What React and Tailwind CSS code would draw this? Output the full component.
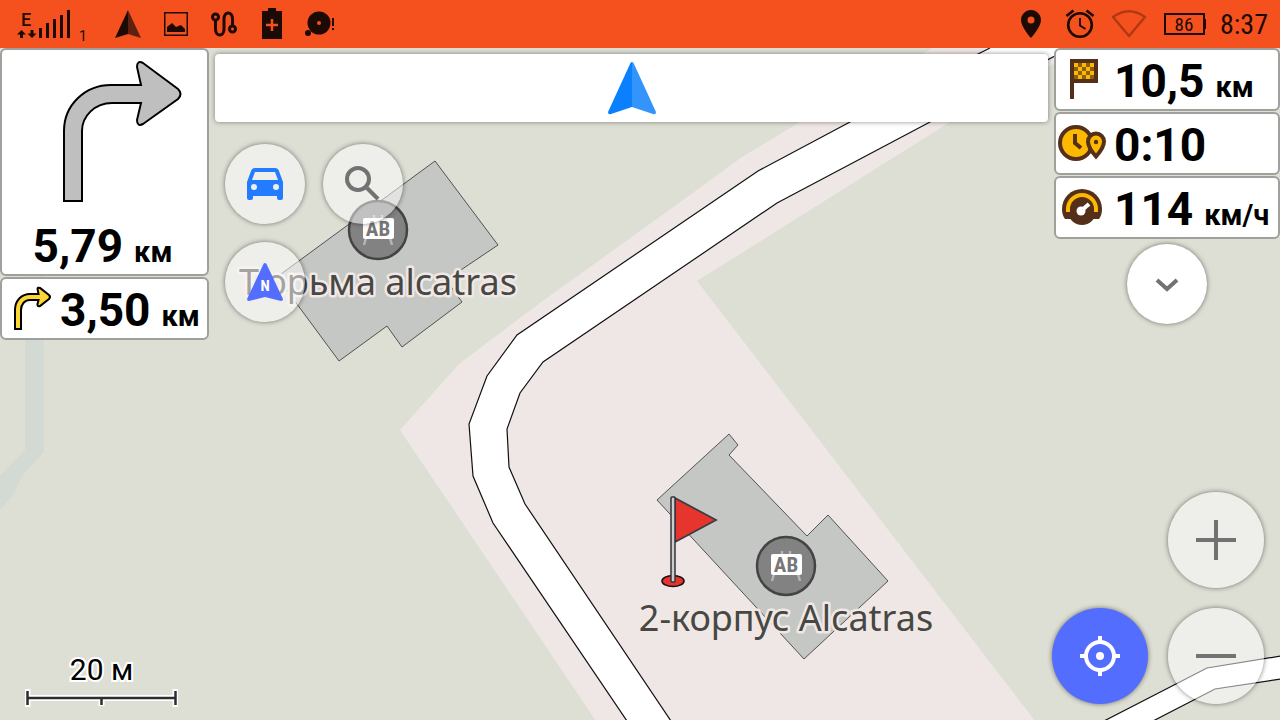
import { Fragment } from 'react';

const BUILDINGS = [
    '435,161 498,245 446,280 462,302 402,347 387,326 339,361 277,277',
    '729,434 738,445 729,455 807,536 828,515 888,581 804,659 657,500',
];

const ROADS = [
    {
        fill: 'M1100 -10 L990 48 L978 54 L850 122 L758 171 L517 335 L487 376 L469 424 L473 476 L493 523 L627 721 L671 721 L525 504 L509 467 L507 429 L520 393 L543 362 L777 203 L930 122 L1070 48 L1180 -10 Z',
        lines: ['M990 48 L978 54 L850 122 L758 171 L517 335 L487 376 L469 424 L473 476 L493 523 L627 721', 'M671 721 L525 504 L509 467 L507 429 L520 393 L543 362 L777 203 L930 122 L1070 48'],
    },
    {
        fill: 'M1104 721 L1207 668 L1281 656 L1281 679 L1215 689 L1153 721 Z',
        lines: ['M1104 721 L1207 668 L1281 656', 'M1153 721 L1215 689 L1281 679'],
    },
];

const POIS = [
    { x: 378, y: 230, label: 'Тюрьма alcatras' },
    { x: 786, y: 566, label: '2-корпус Alcatras' },
];

const SchoolPin = ({ x, y }) => (
    <g transform={`translate(${x} ${y})`}>
        <circle r="29" fill="#828282" stroke="#444" strokeWidth="2.5" />
        <path d="M-12 8 L-14 15 M12 8 L14 15 M-4 -12 V-15 M4 -12 V-15" stroke="#b4b4b4" strokeWidth="2.5" />
        <rect x="-15" y="-12" width="31" height="21" rx="2" fill="#fff" />
        <text y="6" textAnchor="middle" fontSize="21" className="fill-[#777] font-['Roboto_Condensed','Roboto',sans-serif] font-bold">AB</text>
    </g>
);

const MapView = () => (
    <svg viewBox="0 0 1280 720" preserveAspectRatio="xMidYMid slice" className="absolute inset-0 h-full w-full">
        <rect width="1280" height="720" fill="#dddfd4" />
        <path d="M25 0 H44 V452 L22 476 L14 494 L-2 512 V478 L8 467 L25 450 Z" fill="#d3dad4" />
        <path d="M947 40 L800 122 L742 157 L690 195 L540 303 L459 364 L400 430 L596 721 L1035 721 L697 281 L950 122 L1075 52 V40 Z" fill="#efe7e5" />
        {ROADS.map((road) => (
            <Fragment key={road.fill}>
                <path d={road.fill} fill="#fff" />
                {road.lines.map((d) => (
                    <path key={d} d={d} fill="none" stroke="#111" strokeWidth="1.2" />
                ))}
            </Fragment>
        ))}
        {BUILDINGS.map((points) => (
            <polygon key={points} points={points} fill="#c4c7c3" stroke="#444" strokeWidth="0.9" />
        ))}
        {POIS.map((poi) => (
            <g key={poi.label}>
                <SchoolPin x={poi.x} y={poi.y} />
                <text
                    x={poi.x}
                    y={poi.y + 65}
                    textAnchor="middle"
                    fontSize="36"
                    stroke="#f1e7e4"
                    strokeWidth="5"
                    strokeLinejoin="round"
                    paintOrder="stroke"
                    className="fill-[#464845] font-['Noto_Sans',sans-serif]"
                >
                    {poi.label}
                </text>
            </g>
        ))}
        {/* destination flag */}
        <ellipse cx="673" cy="581" rx="11" ry="5.5" fill="#e5352d" stroke="#111" strokeWidth="1.6" />
        <path d="M675 498 L716 520 L675 542 Z" fill="#e5352d" stroke="#3c3c44" strokeWidth="1.8" />
        <rect x="671" y="497" width="4" height="85" rx="1" fill="#ccc" stroke="#33333a" strokeWidth="1.5" />
    </svg>
);

const StatusBar = () => (
    <header className="relative flex h-12 items-center justify-between bg-[#f4511e] pr-3 pl-4 text-[#1d0a04]">
        <div className="flex items-center">
            <svg width="76" height="40" viewBox="16 4 76 40" fill="currentColor">
                <text x="21" y="26" fontSize="18" className="font-['Roboto',sans-serif] font-medium">E</text>
                <path d="M21.500 30 L26 34.500 H23 V38 H20 V34.500 H17 Z" />
                <path d="M32 38 L36.500 33.500 H33.500 V30 H30.500 V33.500 H27.500 Z" />
                <path d="M39 28 h3 v10 h-3 Z M46 23 h3 v15 h-3 Z M53 19 h3 v19 h-3 Z M60 15 h3 v23 h-3 Z M67 10 h3 v28 h-3 Z" />
                <text x="79" y="41" fontSize="14" className="font-['Roboto',sans-serif]">1</text>
            </svg>
            <svg width="26" height="30" viewBox="0 0 26 30" className="ml-[23px]">
                <path d="M13 1 L0 29 L13 25 Z" fill="#1d0a04" />
                <path d="M13 1 L26 29 L13 25 Z" fill="#5d210f" />
            </svg>
            <svg width="24" height="24" viewBox="0 0 24 24" className="ml-[23px]">
                <rect x="0.750" y="0.750" width="22.500" height="22.500" fill="none" stroke="currentColor" strokeWidth="1.5" />
                <path d="M3 20 V15 L8 11 L12 15 L17 13 L21 17 V20 Z" fill="currentColor" />
            </svg>
            <svg width="28" height="28" viewBox="0 0 28 28" className="ml-[22px]" fill="none" stroke="currentColor" strokeWidth="3">
                <circle cx="5.500" cy="7" r="3" />
                <circle cx="22.500" cy="19" r="3" />
                <path d="M5.500 10 V19 C5.500 27 14 27 14 19 V9 C14 1 22.500 1 22.500 9 V16" />
            </svg>
            <svg width="20" height="32" viewBox="0 0 20 32" className="ml-6">
                <path d="M6 0 H14 V3 H20 V31 H0 V3 H6 Z" fill="currentColor" />
                <path d="M10 11 V23 M4 17 H16" stroke="#f4511e" strokeWidth="2.5" />
            </svg>
            <svg width="32" height="28" viewBox="0 0 32 28" className="ml-[22px]" fill="currentColor">
                <circle cx="15" cy="13" r="11.500" />
                <circle cx="15" cy="13" r="2" fill="#f4511e" />
                <circle cx="4" cy="23" r="3" />
                <path d="M28 8 h2 v8 h-2 Z M28 18 h2 v2 h-2 Z" />
            </svg>
        </div>
        <div className="flex items-center">
            <svg width="20" height="28" viewBox="0 0 20 28" className="mr-6">
                <path fillRule="evenodd" d="M10 0 C4.500 0 0 4.500 0 10 C0 17 10 28 10 28 C10 28 20 17 20 10 C20 4.500 15.500 0 10 0 Z M10 6.500 a3.500 3.500 0 1 1 0 7 a3.500 3.500 0 1 1 0 -7 Z" fill="currentColor" />
            </svg>
            <svg width="30" height="30" viewBox="0 0 30 30" className="mr-4" fill="none" stroke="currentColor">
                <circle cx="15" cy="16" r="11.800" strokeWidth="2.600" />
                <path d="M15 9 V16.500 L20.500 20" strokeWidth="2" />
                <path d="M1.500 7 L8.500 1.500 M28.500 7 L21.500 1.500" strokeWidth="2.800" />
            </svg>
            <svg width="36" height="28" viewBox="0 0 36 28" className="mr-[17px]" fill="none" stroke="#b03913" strokeWidth="2.4">
                <path d="M2 7 Q18 -4.500 34 7 L18 26 Z" strokeLinejoin="round" />
            </svg>
            <svg width="42" height="24" viewBox="0 0 42 24" className="mr-[14px]">
                <rect x="1" y="2" width="39" height="20" fill="none" stroke="currentColor" strokeWidth="2" />
                <path d="M39 7 H42 V17 H39 Z" fill="currentColor" />
                <text x="20" y="19" textAnchor="middle" fontSize="19" fill="currentColor" className="font-['Roboto_Condensed','Roboto',sans-serif]">86</text>
            </svg>
            <time className="pt-[2px] font-['Roboto_Condensed','Roboto',sans-serif] text-[28px] leading-8">8:37</time>
        </div>
    </header>
);

const Panel = ({ className, children }) => (
    <div className={`rounded-md border-2 border-[#9f9f9b] bg-white ${className}`}>{children}</div>
);

const Value = ({ value, unit }) => (
    <p className="pt-[2px] text-[46px] leading-[54px] font-bold whitespace-nowrap text-black">
        {value}
        {unit && <span className="ml-[11px] text-[29px] leading-none">{unit}</span>}
    </p>
);

const FlagIcon = () => (
    <svg width="48" height="44" viewBox="0 1 48 44">
        <path d="M14 2 H42 V26 H18 V42 H14 Z" fill="#54301a" />
        <path d="M18 6 H38 V22 H18 Z" fill="#fcb900" />
        <path d="M22 6 h4 v4 h-4 Z M30 6 h4 v4 h-4 Z M18 10 h4 v4 h-4 Z M26 10 h4 v4 h-4 Z M34 10 h4 v4 h-4 Z M22 14 h4 v4 h-4 Z M30 14 h4 v4 h-4 Z M18 18 h4 v4 h-4 Z M26 18 h4 v4 h-4 Z M34 18 h4 v4 h-4 Z" fill="#8c6010" />
    </svg>
);

const ArrivalIcon = () => (
    <svg width="50" height="44" viewBox="0 0 50 44" className="-mr-[2px]">
        <circle cx="20" cy="21" r="16" fill="#fcb900" stroke="#54301a" strokeWidth="4" />
        <path d="M19 12 V21 L25 26" fill="none" stroke="#54301a" strokeWidth="4" />
        <path d="M40 11.500 a8 8 0 0 1 8 8 c0 6 -8 15 -8 15 s-8 -9 -8 -15 a8 8 0 0 1 8 -8 Z" fill="#fcb900" stroke="#54301a" strokeWidth="4" />
        <circle cx="40" cy="20" r="2.200" fill="#54301a" />
    </svg>
);

const SpeedIcon = () => (
    <svg width="48" height="44" viewBox="0 0 48 44">
        <path d="M9 33 H43 Q46 29 46 23 A20 20 0 0 0 6 23 Q6 29 9 33 Z" fill="#54301a" />
        <circle cx="26" cy="25" r="14" fill="#54301a" />
        <path d="M12 26 V23 a14 14 0 0 1 28 0 V26" fill="none" stroke="#fcb900" strokeWidth="4" />
        <circle cx="25" cy="25" r="4.500" fill="#fff" />
        <path d="M25 25 L33 18" stroke="#fff" strokeWidth="4" />
    </svg>
);

const STATS = [
    { icon: FlagIcon, value: '10,5', unit: 'км' },
    { icon: ArrivalIcon, value: '0:10' },
    { icon: SpeedIcon, value: '114', unit: 'км/ч' },
];

const RoundButton = ({ label, className, children }) => (
    <button type="button" aria-label={label} className={`flex shrink-0 items-center justify-center rounded-full shadow-[0_0_5px_rgba(0,0,0,0.5)] ${className}`}>
        {children}
    </button>
);

const NextTurns = () => (
    <section className="flex w-[209px] shrink-0 flex-col gap-px">
        <Panel className="flex flex-col items-center pt-[9px] pb-px">
            <svg width="124" height="145" viewBox="60 59 124 145" className="mr-[23px] mb-[13px] self-end" fill="#bfbfbf" stroke="#000" strokeWidth="2">
                <path d="M64 201 V131 C64 105 85 85 111 85 H141 L137 67 Q137 60 143 63 L178 89 Q183 94 178 99 L143 124 Q137 127 137 120 L141 103 H112 C95 103 82 116 82 131 V201 Z" />
            </svg>
            <div className="pr-1">
                <Value value="5,79" unit="км" />
            </div>
        </Panel>
        <Panel className="flex h-[63px] items-center gap-[7px] pl-[9px]">
            <svg width="42" height="48" viewBox="12 284 42 48" fill="#fdd535" stroke="#000" strokeWidth="2">
                <path d="M16 328 V309 C16 299 23 293 31 293 H39.500 L38.500 288 Q38.500 286 41 287 L50 294 Q52 296 50 298 L41 305 Q38 306 38.500 303 L39.500 299 H31 C26 299 22 303 22 309 V328 Z" />
            </svg>
            <Value value="3,50" unit="км" />
        </Panel>
    </section>
);

const QuickActions = () => (
    <nav className="mt-[22px] ml-[10px] grid w-fit grid-cols-2 gap-[18px]">
        <RoundButton label="Профиль" className="size-20 bg-white/50">
            <svg width="36" height="32" viewBox="0 0 36 32">
                <path fillRule="evenodd" d="M8 0 H28 Q31 0 32 3 L36 14 V30 Q36 32 34 32 H32 Q30 32 30 30 V28 H6 V30 Q6 32 4 32 H2 Q0 32 0 30 V14 L4 3 Q5 0 8 0 Z M8 4 L5 12 H31 L28 4 Z M7 16 a3 3 0 1 0 0 6 a3 3 0 1 0 0 -6 Z M29 16 a3 3 0 1 0 0 6 a3 3 0 1 0 0 -6 Z" fill="#237bff" />
            </svg>
        </RoundButton>
        <RoundButton label="Поиск" className="size-20 bg-white/50">
            <svg width="36" height="36" viewBox="0 0 36 36" fill="none" stroke="#727272" strokeWidth="4">
                <circle cx="13" cy="13" r="11" />
                <path d="M22 22 L33 33" />
            </svg>
        </RoundButton>
        <RoundButton label="Компас" className="size-20 bg-white/50">
            <svg width="36" height="38" viewBox="0 0 36 38">
                <path d="M18 0 Q19.500 0 20 2 L36 36 Q36 38 34 38 L18 34 L2 38 Q0 38 0 36 L16 2 Q16.500 0 18 0 Z" fill="#536dfe" />
                <text x="18" y="28" textAnchor="middle" fontSize="15" className="fill-white font-['Roboto_Condensed','Roboto',sans-serif] font-bold">N</text>
            </svg>
        </RoundButton>
    </nav>
);

const App = () => (
    <main className="relative flex min-h-screen flex-col overflow-hidden font-['Roboto',sans-serif]">
        <MapView />
        <StatusBar />
        <div className="relative flex flex-1 items-start gap-[6px]">
            <NextTurns />
            <section className="flex-1 pt-[6px]">
                <div className="flex h-[68px] items-center justify-center rounded bg-white shadow-[0_0_5px_rgba(0,0,0,0.45)]">
                    <svg width="48" height="54" viewBox="0 0 48 54">
                        <path d="M24 1 Q22.500 1 22 3 L0 51 Q0 54 3 53 L24 46 Z" fill="#0a80ff" />
                        <path d="M24 1 Q25.500 1 26 3 L48 51 Q48 54 45 53 L24 46 Z" fill="#3395fc" />
                    </svg>
                </div>
                <QuickActions />
            </section>
            <section className="flex w-[226px] shrink-0 flex-col items-center gap-px">
                {STATS.map(({ icon: Icon, value, unit }) => (
                    <Panel key={value} className="flex h-[63px] w-full items-center gap-[10px] pt-px">
                        <Icon />
                        <Value value={value} unit={unit} />
                    </Panel>
                ))}
                <RoundButton label="Развернуть" className="mt-1 size-20 bg-white">
                    <svg width="24" height="16" viewBox="0 0 24 16" fill="none" stroke="#727272" strokeWidth="4">
                        <path d="M2 4 L12 13 L22 4" />
                    </svg>
                </RoundButton>
            </section>
        </div>
        <footer className="relative flex items-end justify-between px-4 pb-3">
            <div className="ml-[9px] flex w-[153px] flex-col items-center">
                <span className="text-[30px] leading-9 text-black [paint-order:stroke_fill] [-webkit-text-stroke:4px_white]">20 м</span>
                <svg width="153" height="20" viewBox="0 0 153 20" fill="none">
                    <path d="M2.500 1 V19 M150.500 1 V19 M2 10 H151 M76.500 10 V18" stroke="#fff" strokeWidth="6" />
                    <path d="M2.500 3 V17 M150.500 3 V17 M2 10 H151 M76.500 10 V17" stroke="#2b2e2e" strokeWidth="2.500" />
                </svg>
            </div>
            <div className="flex items-end gap-5 pb-1">
                <RoundButton label="Моё местоположение" className="size-24 bg-[#536dfe]">
                    <svg width="40" height="40" viewBox="0 0 40 40" fill="none" stroke="#fff" strokeWidth="4">
                        <circle cx="20" cy="20" r="14" />
                        <path d="M20 0 V6 M20 34 V40 M0 20 H6 M34 20 H40" />
                        <circle cx="20" cy="20" r="4" fill="#fff" stroke="none" />
                    </svg>
                </RoundButton>
                <div className="flex flex-col gap-5">
                    <RoundButton label="Приблизить" className="size-24 bg-white/50">
                        <svg width="40" height="40" viewBox="0 0 40 40" stroke="#727272" strokeWidth="4">
                            <path d="M20 0 V40 M0 20 H40" />
                        </svg>
                    </RoundButton>
                    <RoundButton label="Отдалить" className="size-24 bg-white/50">
                        <svg width="40" height="40" viewBox="0 0 40 40" stroke="#727272" strokeWidth="4">
                            <path d="M0 20 H40" />
                        </svg>
                    </RoundButton>
                </div>
            </div>
        </footer>
    </main>
);

export default App;
